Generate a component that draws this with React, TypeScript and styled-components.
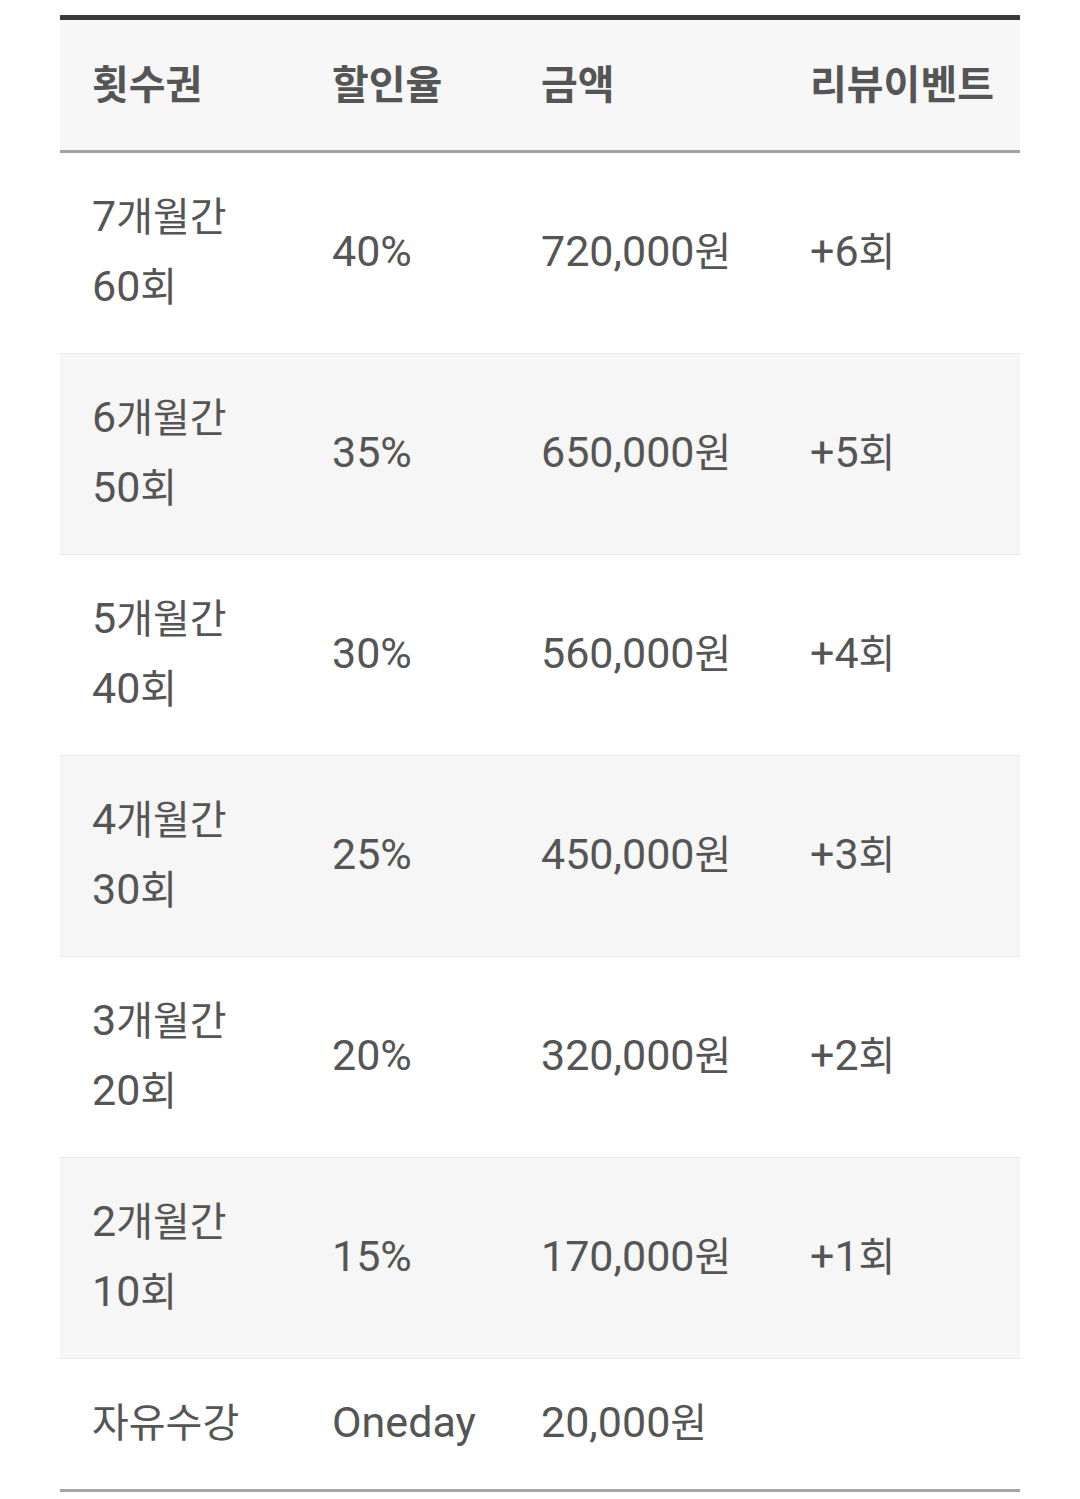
import * as React from "react"
import styled, { createGlobalStyle } from "styled-components"

const GlobalStyle = createGlobalStyle`
  html, body {
    margin: 0;
    padding: 0;
    background: #fff;
  }
  body {
    font-family: "Roboto", "Noto Sans CJK KR", sans-serif;
    color: #555;
  }
`

const Page = styled.div`
  padding: 15px 60px 0 60px;
`

const Table = styled.table`
  width: 960px;
  border-collapse: collapse;
  table-layout: fixed;
  border-top: 5px solid #3a3a3a;
  border-bottom: 3px solid #a6a6a6;
`

const HeadRow = styled.tr`
  background: #f7f7f7;
  border-bottom: 3px solid #a3a3a3;
`

const HeadCell = styled.th`
  padding: 31px 0 29px 32px;
  text-align: left;
  font-size: 40px;
  line-height: 70px;
  font-weight: 700;
  color: #555;
  white-space: nowrap;
`

const Row = styled.tr<{ $shaded: boolean }>`
  background: ${(p) => (p.$shaded ? "#f6f6f6" : "#fff")};
  & + & {
    border-top: 1px solid #e8e8e8;
  }
`

const Cell = styled.td`
  padding: 30px 0 30px 32px;
  font-size: 40px;
  line-height: 70px;
  font-weight: 400;
  color: #555;
  vertical-align: middle;
  white-space: nowrap;
`

const Line = styled.span`
  display: block;
`

// latin runs (digits, %, +, Oneday) sit a touch larger than the hangul
const Latin = styled.span`
  font-size: 43px;
  line-height: 1;
`

const Mixed: React.FC<{ text: string }> = ({ text }) => {
  const parts = text.split(/([\uac00-\ud7a3]+)/).filter(Boolean)
  return (
    <>
      {parts.map((p, i) =>
        /[\uac00-\ud7a3]/.test(p) ? <React.Fragment key={i}>{p}</React.Fragment> : <Latin key={i}>{p}</Latin>
      )}
    </>
  )
}

interface Plan {
  period: string
  count: string
  discount: string
  price: string
  bonus: string
}

const plans: Plan[] = [
  { period: "7개월간", count: "60회", discount: "40%", price: "720,000원", bonus: "+6회" },
  { period: "6개월간", count: "50회", discount: "35%", price: "650,000원", bonus: "+5회" },
  { period: "5개월간", count: "40회", discount: "30%", price: "560,000원", bonus: "+4회" },
  { period: "4개월간", count: "30회", discount: "25%", price: "450,000원", bonus: "+3회" },
  { period: "3개월간", count: "20회", discount: "20%", price: "320,000원", bonus: "+2회" },
  { period: "2개월간", count: "10회", discount: "15%", price: "170,000원", bonus: "+1회" },
]

const App: React.FC = () => {
  return (
    <Page>
      <GlobalStyle />
      <Table>
        <colgroup>
          <col style={{ width: 240 }} />
          <col style={{ width: 209 }} />
          <col style={{ width: 269 }} />
          <col style={{ width: 242 }} />
        </colgroup>
        <thead>
          <HeadRow>
            <HeadCell>횟수권</HeadCell>
            <HeadCell>할인율</HeadCell>
            <HeadCell>금액</HeadCell>
            <HeadCell>리뷰이벤트</HeadCell>
          </HeadRow>
        </thead>
        <tbody>
          {plans.map((plan, i) => (
            <Row key={plan.period} $shaded={i % 2 === 1}>
              <Cell>
                <Line>
                  <Mixed text={plan.period} />
                </Line>
                <Line>
                  <Mixed text={plan.count} />
                </Line>
              </Cell>
              <Cell>
                <Mixed text={plan.discount} />
              </Cell>
              <Cell>
                <Mixed text={plan.price} />
              </Cell>
              <Cell>
                <Mixed text={plan.bonus} />
              </Cell>
            </Row>
          ))}
          <Row $shaded={false}>
            <Cell>자유수강</Cell>
            <Cell>
              <Mixed text="Oneday" />
            </Cell>
            <Cell>
              <Mixed text="20,000원" />
            </Cell>
            <Cell />
          </Row>
        </tbody>
      </Table>
    </Page>
  )
}

export default App
